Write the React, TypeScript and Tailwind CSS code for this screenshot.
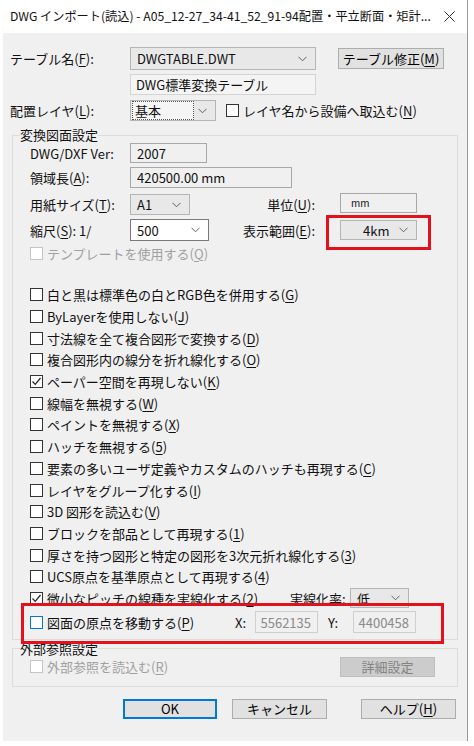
import React from 'react';

const font = { fontFamily: '"Noto Sans CJK JP", "Noto Sans", sans-serif' };

function Chevron({ color = '#606060' }: { color?: string }) {
  return (
    <svg width="9" height="6" viewBox="0 0 9 6" className="shrink-0">
      <polyline points="0.5,0.8 4.5,4.8 8.5,0.8" fill="none" stroke={color} strokeWidth="1" />
    </svg>
  );
}

function Check() {
  return (
    <svg width="11" height="11" viewBox="0 0 11 11">
      <polyline points="1.5,5.5 4.2,8.3 9.5,2" fill="none" stroke="#222" strokeWidth="1.2" />
    </svg>
  );
}

function Box({ checked, disabled, focus }: { checked?: boolean; disabled?: boolean; focus?: boolean }) {
  const border = focus ? 'border-[#0078d7]' : disabled ? 'border-[#c4c4c4]' : 'border-[#333333]';
  return (
    <span className={`flex h-[13px] w-[13px] shrink-0 items-center justify-center border bg-white ${border}`}>
      {checked ? <Check /> : null}
    </span>
  );
}

function Mn({ a, k, b }: { a: string; k: string; b?: string }) {
  return (
    <>
      {a}
      <u className="underline-offset-2">{k}</u>
      {b ?? ')'}
    </>
  );
}

function CheckRow({ children, checked, disabled, focus, className = '' }: { children: React.ReactNode; checked?: boolean; disabled?: boolean; focus?: boolean; className?: string }) {
  return (
    <div className={`flex items-center gap-[4px] ${className}`}>
      <Box checked={checked} disabled={disabled} focus={focus} />
      <span className={`whitespace-nowrap text-[13px] leading-none ${disabled ? 'text-[#a0a0a0]' : 'text-[#111]'}`}>{children}</span>
    </div>
  );
}

function Combo({ value, className, white, focusText }: { value: string; className: string; white?: boolean; focusText?: boolean }) {
  return (
    <div className={`flex items-center justify-between border pl-[3px] pr-[8px] text-[13px] leading-none ${white ? 'border-[#7a7a7a] bg-white' : 'border-[#b5b5b5] bg-[#e8e8e8]'} ${className}`}>
      {focusText ? (
        <span className="border border-dotted border-[#555] bg-[#f5f5f5] px-[2px] py-[2px] pr-[32px]">{value}</span>
      ) : (
        <span className="pl-[3px]">{value}</span>
      )}
      <Chevron />
    </div>
  );
}

function Field({ value, className, right, small }: { value: string; className: string; right?: boolean; small?: boolean }) {
  return (
    <div className={`flex items-center border border-[#a8a8a8] px-[6px] leading-none ${right ? 'justify-end text-[#8a8a8a]' : 'text-[#111]'} ${small ? 'text-[10px]' : 'text-[13px]'} ${className}`}>
      {value}
    </div>
  );
}

function Btn({ children, className = '', primary, disabled }: { children: React.ReactNode; className?: string; primary?: boolean; disabled?: boolean }) {
  return (
    <div
      className={`flex items-center justify-center text-[13px] leading-none ${
        disabled
          ? 'border border-[#bfbfbf] bg-[#cccccc] text-[#838383]'
          : primary
          ? 'border-2 border-[#0078d7] bg-[#e1e1e1] text-black'
          : 'border border-[#adadad] bg-[#e1e1e1] text-black'
      } ${className}`}
    >
      {children}
    </div>
  );
}

const options: { a: string; k: string; b?: string; checked?: boolean }[] = [
  { a: '白と黒は標準色の白とRGB色を併用する(', k: 'G' },
  { a: 'ByLayerを使用しない(', k: 'J' },
  { a: '寸法線を全て複合図形で変換する(', k: 'D' },
  { a: '複合図形内の線分を折れ線化する(', k: 'O' },
  { a: 'ペーパー空間を再現しない(', k: 'K', checked: true },
  { a: '線幅を無視する(', k: 'W' },
  { a: 'ペイントを無視する(', k: 'X' },
  { a: 'ハッチを無視する(', k: '5' },
  { a: '要素の多いユーザ定義やカスタムのハッチも再現する(', k: 'C' },
  { a: 'レイヤをグループ化する(', k: 'I' },
  { a: '3D 図形を読込む(', k: 'V' },
  { a: 'ブロックを部品として再現する(', k: '1' },
  { a: '厚さを持つ図形と特定の図形を3次元折れ線化する(', k: '3' },
  { a: 'UCS原点を基準原点として再現する(', k: '4' },
];

export default function App() {
  return (
    <div className="relative h-[746px] w-[474px] overflow-hidden bg-white text-[#111]" style={font}>
      <div className="ml-[3px] w-[465px] border-r border-[#9a9a9a]">
        {/* title bar */}
        <div className="flex h-[33px] items-center justify-between bg-white pl-[7px] pr-[12px]">
          <span className="whitespace-nowrap text-[12.2px] leading-none">
            DWG インポート(読込) - A05_12-27_34-41_52_91-94配置・平立断面・矩計...
          </span>
          <svg width="11" height="11" viewBox="0 0 11 11">
            <path d="M0.5 0.5 L10.5 10.5 M10.5 0.5 L0.5 10.5" stroke="#333" strokeWidth="1" />
          </svg>
        </div>

        <div className="flex h-[708px] flex-col bg-[#f0f0f0] pl-[7px]">
          <div className="mt-[14px] flex h-[23px] items-center">
            <span className="w-[120px] text-[13px] leading-none"><Mn a="テーブル名(" k="F" b="):" /></span>
            <Combo value="DWGTABLE.DWT" className="h-[23px] w-[186px]" />
            <Btn className="ml-[22px] h-[21px] w-[106px]"><Mn a="テーブル修正(" k="M" /></Btn>
          </div>
          <div className="ml-[120px] mt-[4px] flex h-[21px] w-[186px] items-center border border-[#d4d4d4] bg-[#f4f4f4] px-[5px] text-[13px] leading-none">
            DWG標準変換テーブル
          </div>
          <div className="mt-[5px] flex h-[21px] items-center">
            <span className="w-[120px] text-[13px] leading-none"><Mn a="配置レイヤ(" k="L" b="):" /></span>
            <Combo value="基本" className="h-[21px] w-[86px] !pl-[1px]" focusText />
            <CheckRow className="ml-[10px]"><Mn a="レイヤ名から設備へ取込む(" k="N" /></CheckRow>
          </div>

          {/* 変換図面設定 */}
          <fieldset className="ml-[2px] mt-[6px] w-[446px] border border-[#dcdcdc] pb-[5px] pl-[7px]">
            <legend className="px-0 text-[13px] leading-[16px]">変換図面設定</legend>
            <div className="pl-[10px]">
              <div className="flex h-[20px] items-center">
                <span className="w-[100px] text-[13px] leading-none">DWG/DXF Ver:</span>
                <Field value="2007" className="h-[20px] w-[77px]" />
              </div>
              <div className="mt-[4px] flex h-[21px] items-center">
                <span className="w-[100px] text-[13px] leading-none"><Mn a="領域長(" k="A" b="):" /></span>
                <Field value="420500.00 mm" className="h-[21px] w-[162px]" />
              </div>
              <div className="mt-[5px] flex h-[23px] items-center">
                <span className="w-[100px] text-[13px] leading-none"><Mn a="用紙サイズ(" k="T" b="):" /></span>
                <Combo value="A1" className="h-[21px] w-[60px]" />
                <span className="w-[125px] text-right text-[13px] leading-none"><Mn a="単位(" k="U" b="):" /></span>
                <Field value="mm" small className="ml-[25px] h-[20px] w-[77px] self-start pl-[10px]" />
              </div>
              <div className="mt-[3px] flex h-[22px] items-center">
                <span className="w-[100px] text-[13px] leading-none"><Mn a="縮尺(" k="S" b="): 1/" /></span>
                <Combo value="500" white className="h-[22px] w-[79px]" />
                <span className="w-[106px] text-right text-[13px] leading-none"><Mn a="表示範囲(" k="E" b="):" /></span>
                <div className="ml-[25px] flex h-[20px] w-[77px] items-center justify-between border border-[#b5b5b5] bg-[#e8e8e8] pl-[22px] pr-[8px] text-[13px] leading-none">
                  <span>4km</span>
                  <Chevron />
                </div>
              </div>
              <CheckRow disabled className="mt-[4px] h-[16px]"><Mn a="テンプレートを使用する(" k="Q" /></CheckRow>

              <div className="mt-[23px] flex flex-col">
                {options.map((o) => (
                  <CheckRow key={o.k} checked={o.checked} className="h-[21.7px]">
                    <Mn a={o.a} k={o.k} b={o.b} />
                  </CheckRow>
                ))}
                <div className="flex h-[21px] items-center">
                  <CheckRow checked className="w-[260px]"><Mn a="微小なピッチの線種を実線化する(" k="2" /></CheckRow>
                  <span className="w-[60px] text-[13px] leading-none">実線化率:</span>
                  <Combo value="低" className="h-[20px] w-[59px]" />
                </div>
                <div className="mt-[2px] flex h-[23px] items-center">
                  <CheckRow focus className="w-[205px]"><Mn a="図面の原点を移動する(" k="P" /></CheckRow>
                  <span className="w-[20px] text-[13px] leading-none">X:</span>
                  <Field value="5562135" right className="h-[22px] w-[63px] border-[#cfcfcf]" />
                  <span className="ml-[10px] w-[25px] text-[13px] leading-none">Y:</span>
                  <Field value="4400458" right className="h-[22px] w-[63px] border-[#cfcfcf]" />
                </div>
              </div>
            </div>
          </fieldset>

          {/* 外部参照設定 */}
          <fieldset className="ml-[2px] mt-[1px] w-[446px] border border-[#dcdcdc] pb-[9px] pl-[7px]">
            <legend className="px-0 text-[13px] leading-[16px]">外部参照設定</legend>
            <div className="flex h-[20px] items-center pl-[10px]">
              <CheckRow disabled className="w-[310px]"><Mn a="外部参照を読込む(" k="R" /></CheckRow>
              <Btn disabled className="h-[20px] w-[95px]">詳細設定</Btn>
            </div>
          </fieldset>

          <div className="ml-[113px] mt-[12px] flex h-[20px] items-center">
            <Btn primary className="h-[20px] w-[94px]">OK</Btn>
            <Btn className="ml-[15px] h-[20px] w-[95px]">キャンセル</Btn>
            <Btn className="ml-[34px] h-[20px] w-[95px]"><Mn a="ヘルプ(" k="H" /></Btn>
          </div>
        </div>
      </div>

      {/* red annotation boxes */}
      <div className="absolute left-[326px] top-[215px] h-[35px] w-[105px] border-[3px] border-[#e3111b]" />
      <div className="absolute left-[21px] top-[603px] h-[41px] w-[423px] border-[3px] border-[#e3111b]" />
    </div>
  );
}
